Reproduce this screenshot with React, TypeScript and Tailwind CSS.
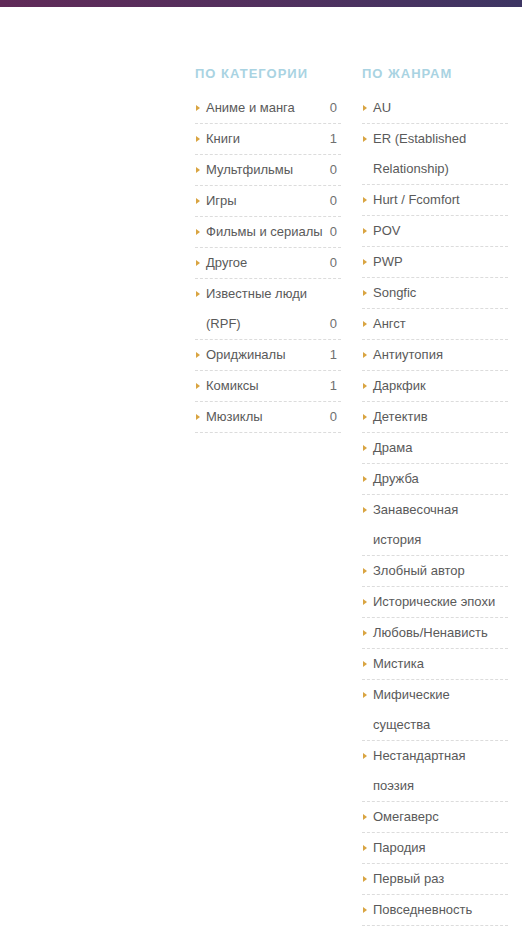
const categories: [string, number][] = [
  ['Аниме и манга', 0],
  ['Книги', 1],
  ['Мультфильмы', 0],
  ['Игры', 0],
  ['Фильмы и сериалы', 0],
  ['Другое', 0],
  ['Известные люди (RPF)', 0],
  ['Ориджиналы', 1],
  ['Комиксы', 1],
  ['Мюзиклы', 0],
];

const genres = [
  'AU',
  'ER (Established Relationship)',
  'Hurt / Fcomfort',
  'POV',
  'PWP',
  'Songfic',
  'Ангст',
  'Антиутопия',
  'Даркфик',
  'Детектив',
  'Драма',
  'Дружба',
  'Занавесочная история',
  'Злобный автор',
  'Исторические эпохи',
  'Любовь/Ненависть',
  'Мистика',
  'Мифические существа',
  'Нестандартная поэзия',
  'Омегаверс',
  'Пародия',
  'Первый раз',
  'Повседневность',
];

const Marker = () => (
  <span className="absolute left-[1px] top-[12px] h-0 w-0 border-y-[3px] border-l-[4px] border-y-transparent border-l-[#d9a441]" />
);

export default function App() {
  return (
    <div className="min-h-[926px] bg-white font-['Liberation_Sans',Arial,sans-serif] text-[13px]">
      <div className="h-[7px] bg-gradient-to-r from-[#602a58] via-[#52305e] to-[#3d3563]" />
      <div className="flex gap-[21px] pl-[195px] pt-[59px]">
        <div className="w-[146px]">
          <h3 className="mb-[11px] text-[13px] font-bold uppercase leading-[16px] tracking-[1px] text-[#a9d3e2]">
            По категории
          </h3>
          <ul>
            {categories.map(([name, count]) => (
              <li
                key={name}
                className="relative flex items-end justify-between border-b border-dashed border-[#dcdcdc] pl-[11px] leading-[30px] text-[#5a5a5a]"
              >
                <Marker />
                <span className="pr-[4px]">{name}</span>
                <span className="pr-[4px] text-[#707070]">{count}</span>
              </li>
            ))}
          </ul>
        </div>
        <div className="w-[146px]">
          <h3 className="mb-[11px] text-[13px] font-bold uppercase leading-[16px] tracking-[1px] text-[#a9d3e2]">
            По жанрам
          </h3>
          <ul>
            {genres.map((name) => (
              <li
                key={name}
                className="relative border-b border-dashed border-[#dcdcdc] pl-[11px] pr-[6px] leading-[30px] text-[#5a5a5a]"
              >
                <Marker />
                {name}
              </li>
            ))}
          </ul>
        </div>
      </div>
    </div>
  );
}
